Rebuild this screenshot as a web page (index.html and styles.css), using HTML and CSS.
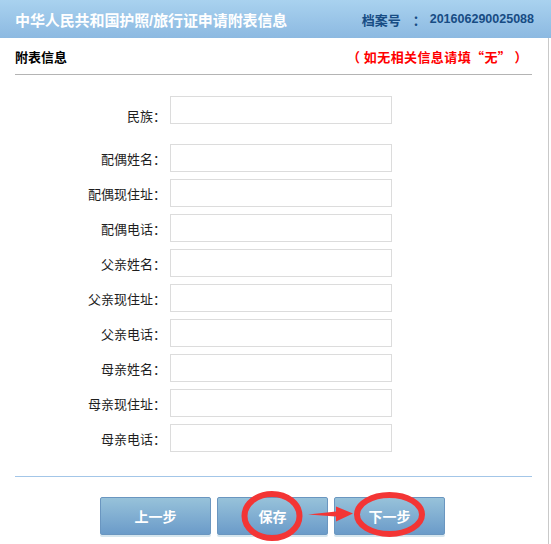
FILE: index.html
```html
<!DOCTYPE html>
<html lang="zh-CN">
<head>
    <meta charset="UTF-8">
    <title>附表信息</title>
    <link rel="stylesheet" href="styles.css">
</head>
<body>
    <div class="page">
        <div class="header">
            <div class="header-title">中华人民共和国护照/旅行证申请附表信息</div>
            <div class="file-no">
                <span class="file-label">档案号</span>
                <span class="file-colon">：</span>
                <span class="file-value">201606290025088</span>
            </div>
        </div>

        <div class="panel">
            <div class="section-head">
                <span class="section-title">附表信息</span>
                <span class="section-note">（ 如无相关信息请填“无” ）</span>
            </div>

            <div class="form">
                <div class="row row-first">
                    <label class="row-label">民族：</label>
                    <input class="row-input" type="text">
                </div>
                <div class="row">
                    <label class="row-label">配偶姓名：</label>
                    <input class="row-input" type="text">
                </div>
                <div class="row">
                    <label class="row-label">配偶现住址：</label>
                    <input class="row-input" type="text">
                </div>
                <div class="row">
                    <label class="row-label">配偶电话：</label>
                    <input class="row-input" type="text">
                </div>
                <div class="row">
                    <label class="row-label">父亲姓名：</label>
                    <input class="row-input" type="text">
                </div>
                <div class="row">
                    <label class="row-label">父亲现住址：</label>
                    <input class="row-input" type="text">
                </div>
                <div class="row">
                    <label class="row-label">父亲电话：</label>
                    <input class="row-input" type="text">
                </div>
                <div class="row">
                    <label class="row-label">母亲姓名：</label>
                    <input class="row-input" type="text">
                </div>
                <div class="row">
                    <label class="row-label">母亲现住址：</label>
                    <input class="row-input" type="text">
                </div>
                <div class="row">
                    <label class="row-label">母亲电话：</label>
                    <input class="row-input" type="text">
                </div>
            </div>

            <hr class="divider">

            <div class="actions">
                <button class="btn" type="button">上一步</button>
                <button class="btn" type="button">保存</button>
                <button class="btn" type="button">下一步</button>

                <!-- red annotation marks drawn over the buttons -->
                <svg class="marks" width="551" height="66" viewBox="0 478 551 66">
                    <ellipse cx="272" cy="517" rx="27.5" ry="22" fill="none" stroke="#f33535" stroke-width="6"/>
                    <ellipse cx="389.5" cy="515.5" rx="32.5" ry="19.5" fill="none" stroke="#f33535" stroke-width="6"/>
                    <polygon points="308,515.5 336,512.5 336,507.5 353,514.5 336,522.5 336,517.5" fill="#f33535"/>
                </svg>
            </div>
        </div>
    </div>
</body>
</html>
```

FILE: styles.css
```css
body {
    margin: 0;
    background: #ffffff;
    font-family: "Liberation Sans", "Noto Sans CJK SC", sans-serif;
    color: #222222;
}
.page {
    width: 551px;
    height: 544px;
    overflow: hidden;
}
.header {
    height: 38px;
    display: flex;
    align-items: center;
    justify-content: space-between;
    padding: 0 17px 0 15px;
    background: linear-gradient(to bottom, #a9d2ef, #8cb9e1); /* sky blue bar */
}
.header-title {
    font-size: 15px;
    font-weight: 700;
    color: #ffffff;
    letter-spacing: -0.1px;
}
.file-no {
    display: flex;
    align-items: center;
    font-weight: 700;
    color: #174c84;
}
.file-label {
    font-size: 13px;
}
.file-colon {
    font-family: "Noto Sans CJK SC", sans-serif;
    font-size: 13px;
    margin: 0 4px 0 12px;
}
.file-value {
    font-size: 12.5px;
}
.panel {
    margin-right: 2px;
    border-right: 1px solid #c9c9c9; /* thin frame on the right */
    height: 506px;
}
.section-head {
    height: 36px;
    margin: 0 16px 0 15px;
    display: flex;
    align-items: center;
    justify-content: space-between;
    border-bottom: 1px solid #b4b4b4;
    font-size: 13px;
    font-weight: 700;
}
.section-title {
    color: #000000;
}
.section-note {
    font-family: "Noto Sans CJK SC", sans-serif;
    color: #ff0000;
    margin-right: 4px;
    letter-spacing: 0.4px;
}
.form {
    padding-top: 21px;
    display: flex;
    flex-direction: column;
    gap: 7px;
}
.row {
    display: grid;
    grid-template-columns: 166px 222px;
    column-gap: 4px;
    align-items: center;
}
.row-first {
    margin-bottom: 13px;
}
.row-first .row-label {
    padding-top: 13px;
    line-height: 15px;
}
.row-label {
    text-align: right;
    font-size: 13px;
    color: #1e1e1e;
}
.row-input {
    box-sizing: border-box;
    height: 28px;
    width: 222px;
    margin: 0;
    border: 1px solid #dcdcdc;
    background: #ffffff;
    outline: none;
}
.divider {
    border: none;
    border-top: 1px solid #a3c6e8; /* light blue rule */
    margin: 24px 16px 0 15px;
}
.actions {
    position: relative;
    display: flex;
    gap: 6px;
    padding: 20px 0 0 100px;
    height: 46px;
}
.btn {
    width: 111px;
    height: 38px;
    border: 1px solid #6a96c0;
    border-radius: 2px;
    background: linear-gradient(to bottom, #97c2da, #6b9bc9);
    box-shadow: 0 2px 0 #d6e6ee;
    color: #ffffff;
    font-family: "Noto Sans CJK SC", sans-serif;
    font-size: 14px;
    font-weight: 700;
    padding: 0;
}
.marks {
    position: absolute;
    left: 0;
    top: 0;
    pointer-events: none;
}
```
